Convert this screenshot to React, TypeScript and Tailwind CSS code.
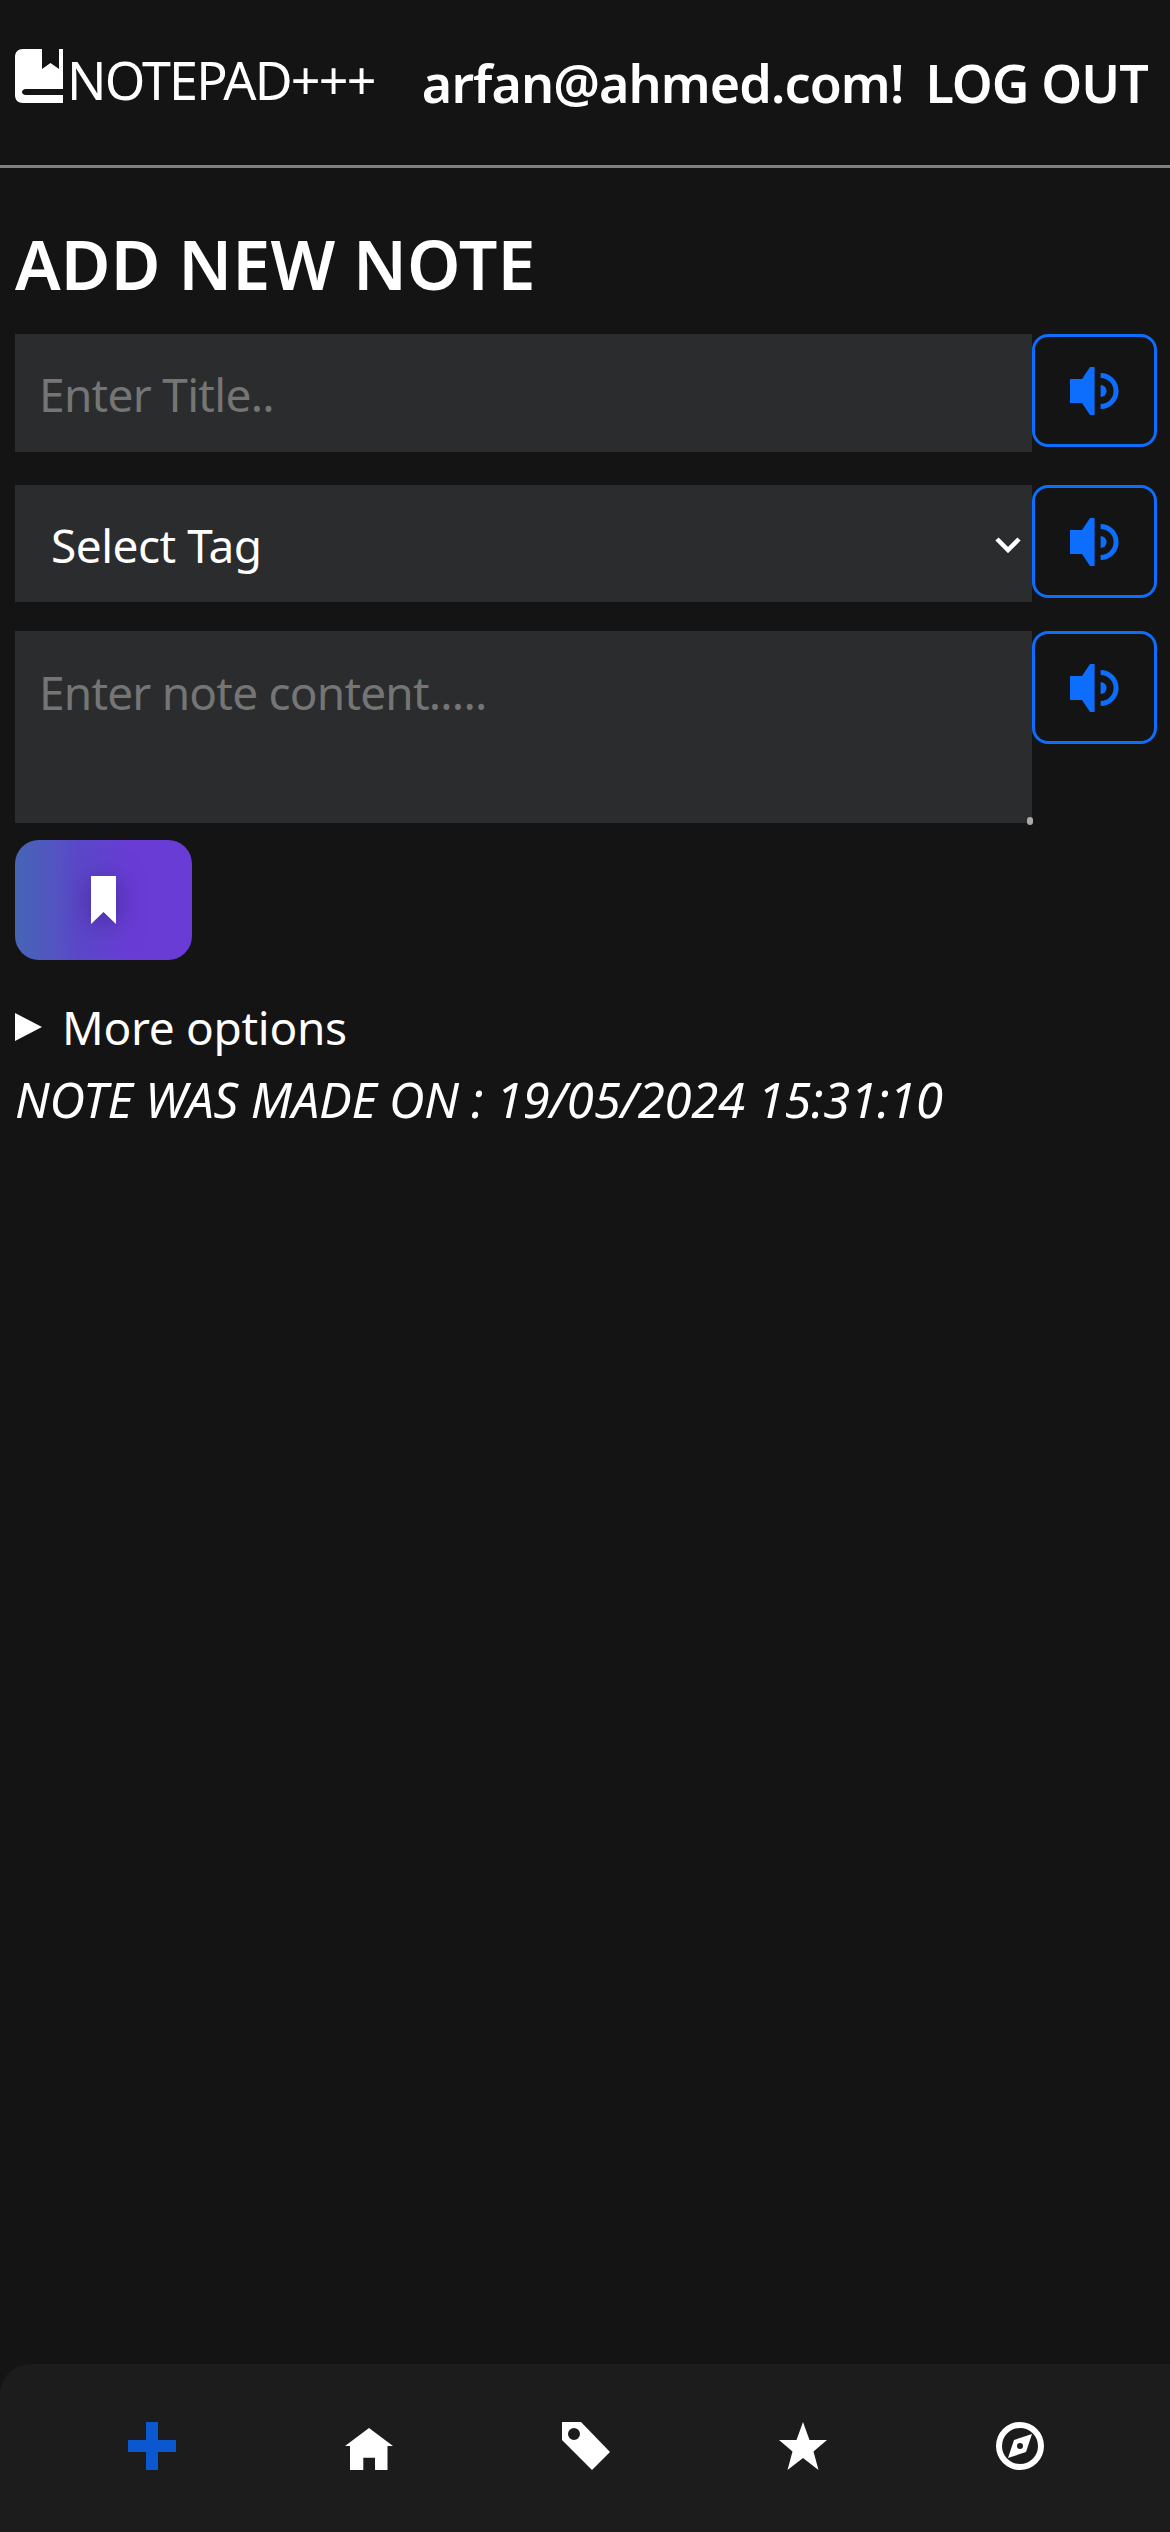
const SpeakerIcon = () => (
  <svg viewBox="0 0 49 48" className="h-[48px] w-[49px]" fill="currentColor">
    <polygon points="0,12 12,12 20,0 24.6,0 24.6,48 20,48 12,36 0,36" />
    <path d="M30.6 18a6 6 0 0 1 0 12Z" />
    <path d="M30.6 6a18 18 0 0 1 0 36v-5a13 13 0 0 0 0-26Z" />
  </svg>
);

const SpeakButton = () => (
  <button className="flex h-[113px] w-[125px] shrink-0 items-center justify-center rounded-[16px] border-[3px] border-[#0d6efd] text-[#0d6efd]">
    <SpeakerIcon />
  </button>
);

const PlusIcon = () => (
  <svg viewBox="0 0 48 48" className="h-[48px] w-[48px] text-[#0b57cf]" fill="currentColor">
    <polygon points="18,0 30,0 30,18 48,18 48,30 30,30 30,48 18,48 18,30 0,30 0,18 18,18" />
  </svg>
);

const HomeIcon = () => (
  <svg viewBox="0 0 48 48" className="h-[48px] w-[48px]" fill="white">
    <polygon points="24,6 48,24 42.5,24 42.5,48 30,48 30,35.7 18.3,35.7 18.3,48 5,48 5,24 0,24" />
  </svg>
);

const TagIcon = () => (
  <svg viewBox="0 0 48 48" className="h-[48px] w-[48px]" fill="white">
    <path fillRule="evenodd" d="M0 0H19L48 30L30 48L0 18ZM12 6a6 6 0 1 0 0 12a6 6 0 1 0 0-12Z" />
  </svg>
);

const StarIcon = () => (
  <svg viewBox="0 0 48 48" className="h-[48px] w-[48px]" fill="white">
    <polygon points="24,0 30.5,18 48,18 34.5,29.5 39.5,48 24,36 8.5,48 13.5,29.5 0,18 17.5,18" />
  </svg>
);

const CompassIcon = () => (
  <svg viewBox="0 0 48 48" className="h-[48px] w-[48px]" fill="white">
    <path fillRule="evenodd" d="M24 0a24 24 0 1 0 0 48a24 24 0 1 0 0-48ZM24 6a18 18 0 1 1 0 36a18 18 0 1 1 0-36Z" />
    <path fillRule="evenodd" d="M36 12L30 30L12 36L18 18ZM24 21a3 3 0 1 0 0 6a3 3 0 1 0 0-6Z" />
  </svg>
);

const navIcons = [PlusIcon, HomeIcon, TagIcon, StarIcon, CompassIcon];

export default function App() {
  return (
    <div className="flex h-[2532px] flex-col bg-[#141414] font-['Noto_Sans',sans-serif] text-white">
      <header className="flex h-[168px] items-center justify-between border-b-[3px] border-[#808080] pb-[6px] pl-[15px] pr-[22px]">
        <div className="flex items-center gap-[4px]">
          <svg viewBox="0 0 48 54" className="mb-[8px] h-[54px] w-[48px]" fill="white">
            <path d="M8 0H27V20L35.5 14L44 20V0H48V40H11C8 40 7 42 7 43S8 46 11 46H48V54H8C3 54 0 51 0 46V8C0 3 3 0 8 0Z" />
          </svg>
          <span className="text-[52px] tracking-[-1.8px]">NOTEPAD+++</span>
        </div>
        <div className="mt-[6px] flex items-center gap-[22px] text-[52px] font-semibold tracking-[-0.9px]">
          <span>arfan@ahmed.com!</span>
          <span>LOG OUT</span>
        </div>
      </header>

      <main className="flex-1 px-[15px]">
        <h2 className="mt-[51px] text-[68px] leading-[90px] font-semibold tracking-[0.1px]">ADD NEW NOTE</h2>

        <div className="mt-[25px] flex items-start">
          <input
            placeholder="Enter Title.."
            className="h-[118px] w-[1017px] shrink-0 bg-[#2b2c2e] px-[24px] pt-[2px] text-[46px] tracking-[-0.7px] outline-none placeholder:text-[#757575]"
          />
          <SpeakButton />
        </div>

        <div className="mt-[33px] flex items-start">
          <div className="relative h-[117px] w-[1017px] shrink-0 bg-[#2b2c2e]">
            <select className="h-full w-full appearance-none bg-transparent px-[36px] pt-[3px] text-[46px] tracking-[-0.5px] outline-none">
              <option>Select Tag</option>
            </select>
            <svg viewBox="0 0 26 17" className="absolute top-[51px] right-[11px] h-[17px] w-[26px]" fill="none" stroke="white" strokeWidth="4.5">
              <path d="M2 3 13 14 24 3" />
            </svg>
          </div>
          <SpeakButton />
        </div>

        <div className="mt-[29px] flex items-start">
          <div className="relative h-[192px] w-[1017px] shrink-0 bg-[#2b2c2e]">
            <textarea
              placeholder="Enter note content....."
              className="block h-full w-full resize-none bg-transparent px-[24px] pt-[29px] text-[46px] leading-[64px] tracking-[-0.8px] outline-none placeholder:text-[#757575]"
            />
            <span className="absolute right-[-1px] bottom-[-2px] h-[8px] w-[6px] rounded-full bg-[#aaaaaa]" />
          </div>
          <SpeakButton />
        </div>

        <button className="mt-[17px] flex h-[120px] w-[177px] items-center justify-center rounded-[24px] bg-gradient-to-r from-[#4565b5] from-[0%] via-[#5a48c8] via-[35%] to-[#693cd6] to-[65%]">
          <svg viewBox="0 0 25 48" className="h-[48px] w-[25px] drop-shadow-[0_4px_14px_rgba(50,30,120,0.7)]" fill="white">
            <polygon points="0,0 25,0 25,48 12.5,36 0,48" />
          </svg>
        </button>

        <div className="mt-[35px] flex items-center gap-[20px] text-[46px] leading-[64px] tracking-[-0.3px]">
          <span className="h-0 w-0 border-y-[14px] border-l-[27px] border-y-transparent border-l-white" />
          <span>More options</span>
        </div>
        <p className="mt-[8px] text-[49px] leading-[64px] italic tracking-[-0.2px]">NOTE WAS MADE ON : 19/05/2024 15:31:10</p>
      </main>

      <nav className="grid h-[168px] grid-cols-5 items-start rounded-tl-[30px] bg-[#1c1c1c] pt-[58px] pr-[42px] pl-[44px]">
        {navIcons.map((Icon, i) => (
          <div key={i} className="flex justify-center">
            <Icon />
          </div>
        ))}
      </nav>
    </div>
  );
}
